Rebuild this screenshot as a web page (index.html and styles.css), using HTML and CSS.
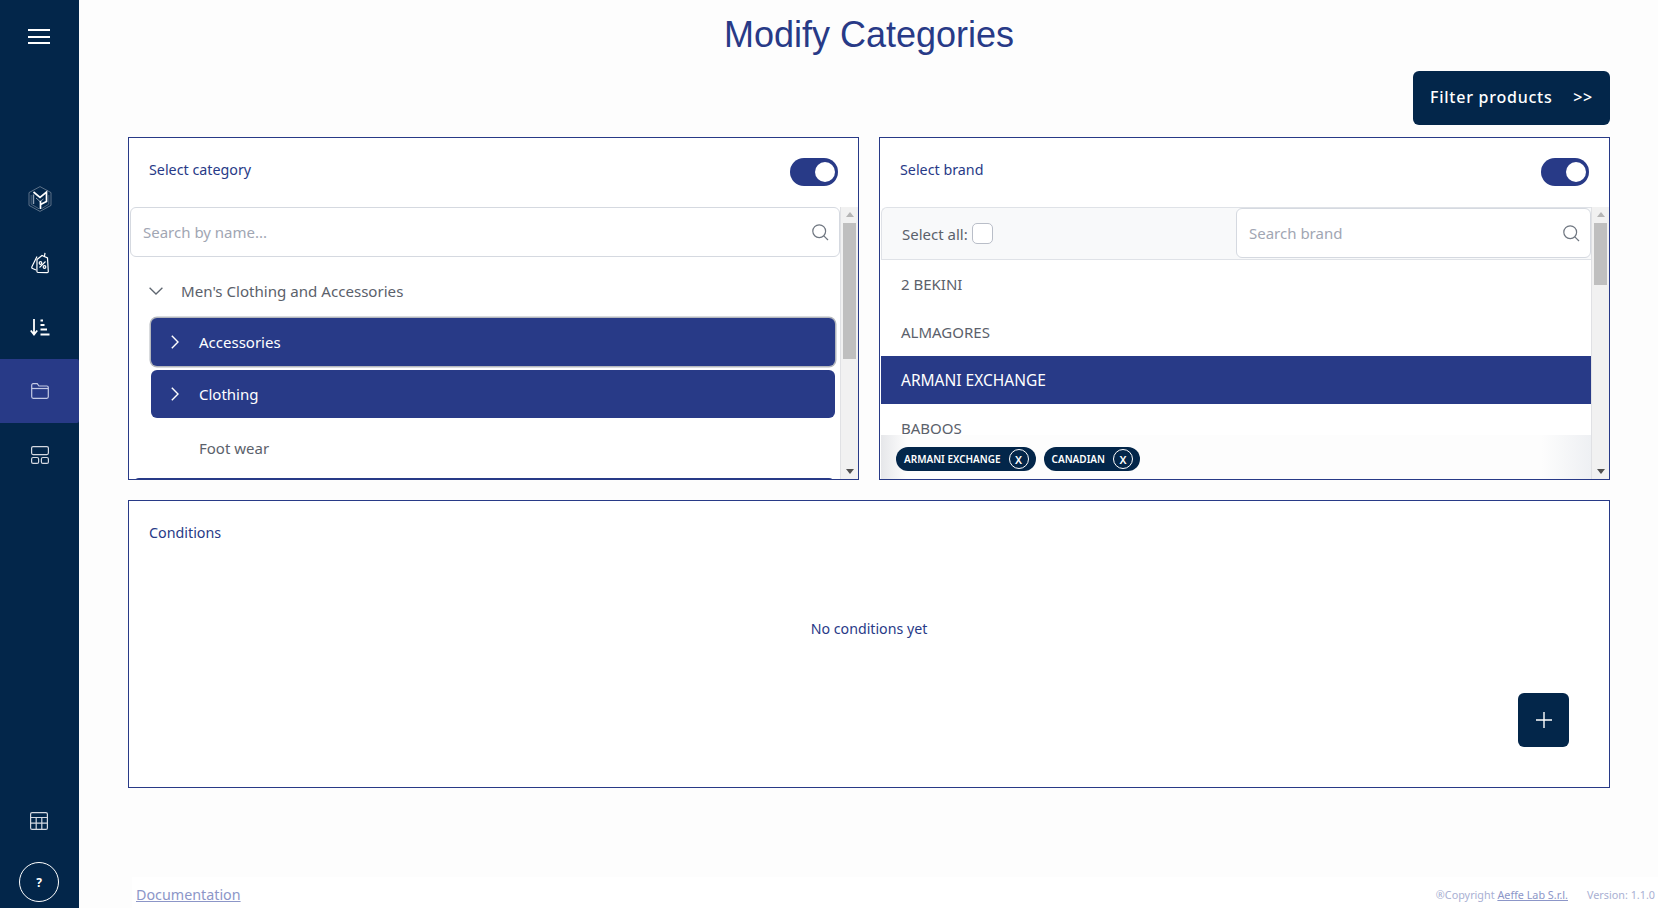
FILE: index.html
```html
<!DOCTYPE html>
<html lang="en">
<head>
<meta charset="utf-8">
<title>Modify Categories</title>
<link rel="stylesheet" href="styles.css">
</head>
<body>
<div class="app">
  <aside class="sidebar">
    <button class="burger" aria-label="Menu"><span></span><span></span><span></span></button>
    <nav class="nav">
      <a class="nav-item"><svg width="24" height="26" viewBox="0 0 24 26" fill="none"><path d="M12 .6 23 6.600v12.800L12 25.400 1 19.400V6.600z" stroke="#66798f" stroke-width=".9"/><path d="M3.200 9v9.200L11 22.800" stroke="#4f647c" stroke-width="1"/><path d="M20.800 9v9.200L14 22.400" stroke="#4f647c" stroke-width="1"/><path d="M5.500 6 12 11.500 18.500 6v9.500l-6 3" stroke="#fff" stroke-width="1.700"/><path d="M5.500 8.500V18" stroke="#8fa0b3" stroke-width="1.400"/><path d="M8 12 12 15.500 15.500 13" stroke="#8fa0b3" stroke-width="1"/><path d="M12.500 23V15" stroke="#fff" stroke-width="1.700"/></svg></a>
      <a class="nav-item"><svg width="20" height="22" viewBox="0 0 20 22" fill="none" stroke="#fff" stroke-width="1.200"><path d="M7 4.500 2 14.500c-.5 1-.2 1.700.6 2l3.400 1.500"/><path d="M7 7.500 12 3.500l5.500 2.500.8 13.500c0 .7-.4 1.200-1.100 1.200L8 20.500c-.7 0-1.100-.5-1.100-1.200z"/><path d="M14.500 4 15 .8"/><path d="M9.500 15.500l6-6" stroke-width="1.100"/><circle cx="10.500" cy="11" r="1.300"/><circle cx="14.500" cy="15" r="1.300"/></svg></a>
      <a class="nav-item"><svg width="20" height="17" viewBox="0 0 20 17" fill="none" stroke="#fff"><path d="M4 0v15M.8 11.500 4 15.500l3.200-4" stroke-width="1.800"/><path d="M10.500 1.500h2.500M10.500 6h4M10.500 10.500h6.500M10.500 15.500h9" stroke-width="1.800"/></svg></a>
      <a class="nav-item active"><svg width="18" height="16" viewBox="0 0 18 16" fill="none" stroke="#c3c9e4" stroke-width="1.200"><path d="M.7 13.800V2.200C.7 1.300 1.300.7 2.200.7h4l1.800 2.300h7.800c.9 0 1.500.6 1.500 1.500v9.300c0 .9-.6 1.500-1.500 1.500H2.200c-.9 0-1.500-.6-1.500-1.700z"/><path d="M.7 5.500h16.600"/></svg></a>
      <a class="nav-item"><svg width="18" height="18" viewBox="0 0 18 18" fill="none" stroke="#d5d9e2" stroke-width="1.200"><rect x=".6" y=".6" width="16.800" height="8" rx="1.500"/><rect x=".6" y="11.500" width="7" height="5.900" rx="1.500"/><rect x="10.400" y="11.500" width="7" height="5.900" rx="1.500"/></svg></a>
    </nav>
    <a class="table-link"><svg width="18" height="18" viewBox="0 0 18 18" fill="none" stroke="#d5d9e2" stroke-width="1.200"><rect x=".6" y=".6" width="16.800" height="16.800" rx="1.500"/><path d="M.6 5.500h16.800M.6 11.200h16.800M6.200 5.500v11.900M11.800 5.500v11.900"/></svg></a>
    <a class="help">?</a>
  </aside>

  <main class="main">
    <h1 class="title">Modify Categories</h1>
    <div class="actions">
      <button class="filter-btn"><span>Filter products</span><span>&gt;&gt;</span></button>
    </div>

    <section class="selectors">
      <div class="panel">
        <header class="panel-head">
          <span class="panel-label">Select category</span>
          <span class="toggle"><span class="knob"></span></span>
        </header>
        <div class="panel-body">
          <div class="panel-content">
            <label class="search search-cat">
              <span class="placeholder">Search by name...</span>
              <svg class="search-icon" width="17" height="17" viewBox="0 0 17 17" fill="none" stroke="#6f7680" stroke-width="1.200"><circle cx="7.200" cy="7.200" r="6.400"/><path d="M11.800 11.800 16 16"/></svg>
            </label>
            <div class="tree-root">
              <svg width="14" height="8" viewBox="0 0 14 8" fill="none" stroke="#5e6670" stroke-width="1.300"><path d="M.6.800 7 7l6.400-6.200"/></svg>
              <span>Men's Clothing and Accessories</span>
            </div>
            <ul class="tree">
              <li class="tree-item selected focused"><svg width="8" height="14" viewBox="0 0 8 14" fill="none" stroke="#fff" stroke-width="1.400"><path d="M.8.800 7 7 .8 13.200"/></svg><span>Accessories</span></li>
              <li class="tree-item selected"><svg width="8" height="14" viewBox="0 0 8 14" fill="none" stroke="#fff" stroke-width="1.400"><path d="M.8.800 7 7 .8 13.200"/></svg><span>Clothing</span></li>
              <li class="tree-item plain"><span>Foot wear</span></li>
              <li class="tree-item selected clipped"></li>
            </ul>
          </div>
          <div class="scrollbar"><i class="arrow up"></i><i class="thumb thumb-cat"></i><i class="arrow down"></i></div>
        </div>
      </div>

      <div class="panel">
        <header class="panel-head">
          <span class="panel-label">Select brand</span>
          <span class="toggle"><span class="knob"></span></span>
        </header>
        <div class="panel-body">
          <div class="panel-content">
            <div class="brand-bar">
              <span class="select-all">Select all:<i class="checkbox"></i></span>
              <label class="search search-brand">
                <span class="placeholder">Search brand</span>
                <svg class="search-icon" width="17" height="17" viewBox="0 0 17 17" fill="none" stroke="#6f7680" stroke-width="1.200"><circle cx="7.200" cy="7.200" r="6.400"/><path d="M11.800 11.800 16 16"/></svg>
              </label>
            </div>
            <ul class="brands">
              <li>2 BEKINI</li>
              <li>ALMAGORES</li>
              <li class="on">ARMANI EXCHANGE</li>
              <li>BABOOS</li>
            </ul>
            <div class="chips">
              <span class="chip">ARMANI EXCHANGE<b>X</b></span>
              <span class="chip">CANADIAN<b>X</b></span>
            </div>
          </div>
          <div class="scrollbar"><i class="arrow up"></i><i class="thumb thumb-brand"></i><i class="arrow down"></i></div>
        </div>
      </div>
    </section>

    <section class="panel conditions">
      <span class="panel-label">Conditions</span>
      <p class="empty">No conditions yet</p>
      <button class="add-btn" aria-label="Add"><svg width="16" height="16" viewBox="0 0 16 16" stroke="#fff" stroke-width="1.400"><path d="M8 0v16M0 8h16"/></svg></button>
    </section>

    <footer class="footer">
      <a class="doc-link">Documentation</a>
      <span class="legal">®Copyright <a>Aeffe Lab S.r.l.</a><span class="version">Version: 1.1.0</span></span>
    </footer>
  </main>
</div>
</body>
</html>
```
FILE: styles.css
```css
* { box-sizing: border-box; }
html, body { margin: 0; height: 100%; }
body {
  font-family: "Noto Sans", "Open Sans", sans-serif;
  font-size: 14.5px;
  color: #5b616b;
  background: #fdfdfd;
  overflow: hidden;
}
button { font: inherit; border: 0; padding: 0; cursor: pointer; }
ul { list-style: none; margin: 0; padding: 0; }
i { display: block; }

.app { display: flex; height: 908px; }

/* Sidebar */
.sidebar {
  width: 79px;
  flex: none;
  background: #03264a;
  display: flex;
  flex-direction: column;
  align-items: stretch;
}
.burger {
  width: 22px;
  height: 15px;
  margin: 29px 0 0 28px;
  background: none;
  display: flex;
  flex-direction: column;
  justify-content: space-between;
}
.burger span { display: block; height: 2px; background: #fff; }
.nav { margin-top: 123px; display: flex; flex-direction: column; }
.nav-item { height: 64px; display: flex; align-items: center; justify-content: center; }
.nav-item.active { background: #283a87; border-radius: 0 2px 2px 0; }
.table-link { margin-top: auto; display: flex; justify-content: center; padding-right: 2px; }
.help {
  width: 40px;
  height: 40px;
  margin: 32px 0 6px 19px;
  border: 1px solid #fff;
  border-radius: 50%;
  color: #fff;
  font-size: 12px;
  font-weight: 700;
  display: flex;
  align-items: center;
  justify-content: center;
}

/* Main */
.main { flex: 1; min-width: 0; display: flex; flex-direction: column; padding: 0 48px 0 49px; }
.title {
  margin: 14px 0 0;
  font: 400 36px/41px "Liberation Sans", Arial, sans-serif;
  color: #283a87;
  text-align: center;
}
.actions { display: flex; justify-content: flex-end; margin-top: 16px; }
.filter-btn {
  width: 197px;
  height: 54px;
  background: #03264a;
  color: #fff;
  border-radius: 6px;
  font-size: 16px;
  font-weight: 500;
  letter-spacing: .75px;
  display: flex;
  align-items: center;
  justify-content: space-between;
  padding: 0 17px 2px 17px;
}

.selectors { display: grid; grid-template-columns: 731px 731px; gap: 20px; margin-top: 12px; }
.panel { background: #fff; border: 1px solid #283a87; }
.selectors .panel { height: 343px; display: flex; flex-direction: column; overflow: hidden; }
.panel-head { height: 69px; flex: none; display: flex; align-items: flex-start; justify-content: space-between; padding: 20px 20px 0 20px; }
.panel-label { color: #283a87; font-size: 14.3px; line-height: 20px; padding-top: 2px; }
.toggle { width: 48px; height: 28px; border-radius: 14px; background: #283a87; display: flex; align-items: center; justify-content: flex-end; padding-right: 3px; }
.knob { width: 20px; height: 20px; border-radius: 50%; background: #fff; }

.panel-body { flex: 1; min-height: 0; display: flex; }
.panel-content { flex: 1; min-width: 0; position: relative; overflow: hidden; }

.scrollbar { width: 18px; flex: none; background: #f1f1f1; border-left: 1px solid #e0e1e4; display: flex; flex-direction: column; align-items: center; padding: 5px 0; }
.thumb { width: 13px; background: #bfbfbf; }
.thumb-cat { height: 136px; margin-top: 6px; }
.thumb-brand { height: 62px; margin-top: 6px; }
.arrow { width: 0; height: 0; border-left: 4px solid transparent; border-right: 4px solid transparent; }
.arrow.up { border-bottom: 5px solid #b5b5b5; }
.arrow.down { border-top: 5px solid #505050; margin-top: auto; }

.search { display: flex; align-items: center; justify-content: space-between; height: 50px; background: #fff; border: 1px solid #d5d9e0; border-radius: 6px; padding: 0 10px 0 12px; }
.placeholder { color: #a1a6b3; font-size: 15px; }
.search-cat { margin-left: 1px; }
.tree-root { height: 50px; margin-top: 9px; display: flex; align-items: center; gap: 18px; padding-left: 20px; font-size: 15.1px; }
.tree { padding: 0 5px 0 22px; margin-top: 2px; display: flex; flex-direction: column; gap: 4px; }
.tree-item { height: 48px; flex: none; border-radius: 6px; display: flex; align-items: center; gap: 20px; padding-left: 20px; font-size: 15px; }
.tree-item.selected { background: #283a87; color: #fff; }
.tree-item.focused { box-shadow: 0 0 0 1.500px #b4b7bd; }
.tree-item.plain { margin: 2px 0; padding-left: 48px; }
.tree-item.clipped { margin-left: -18px; }

.brand-bar { height: 53px; margin-left: 1px; background: #f8f9fa; border: 1px solid #dfe2e7; border-width: 1px 0 1px 1px; border-radius: 6px 0 0 0; display: flex; align-items: flex-start; justify-content: space-between; padding-left: 20px; }
.select-all { align-self: center; display: flex; align-items: center; gap: 4px; font-size: 15px; }
.checkbox { width: 21px; height: 21px; border: 1px solid #b9bec8; border-radius: 5px; background: #fff; }
.search-brand { width: 355px; }
.brands { margin-left: 1px; }
.brands li { height: 48px; display: flex; align-items: center; padding-left: 20px; font-size: 15px; }
.brands li.on { background: #283a87; color: #fff; font-size: 15.5px; }
.chips {
  position: absolute;
  left: 1px; right: 0; bottom: 0;
  height: 44px;
  background: linear-gradient(90deg, #e6e7ea 0, #fdfdfd 26px, #fdfdfd 93%, #eef0f3 100%);
  display: flex;
  gap: 8px;
  padding: 12px 0 0 15px;
}
.chip {
  height: 24px;
  border-radius: 12px;
  background: #03264a;
  color: #fff;
  font-size: 10px;
  font-weight: 600;
  display: flex;
  align-items: center;
  gap: 8px;
  padding: 0 7px 0 8px;
}
.chip b { width: 20px; height: 20px; border: 1px solid #fff; border-radius: 50%; display: flex; align-items: center; justify-content: center; font-weight: 600; font-size: 11px; }

.conditions { height: 288px; margin-top: 20px; padding: 20px 40px 0 20px; display: flex; flex-direction: column; }
.empty { margin: 76px 0 0; text-align: center; color: #283a87; font-size: 14.2px; line-height: 20px; padding-left: 20px; }
.add-btn { width: 51px; height: 54px; align-self: flex-end; margin-top: 54px; background: #03264a; border-radius: 6px; display: flex; align-items: center; justify-content: center; }

.footer { margin: auto -48px 0 4px; height: 31px; padding: 3px 3px 0 4px; background: #fff; display: flex; align-items: center; justify-content: space-between; }
.doc-link { color: #8c96c8; text-decoration: underline; font-size: 14.3px; }
.legal { color: #a9b0d3; font-size: 10.8px; }
.legal a { color: #8c96c8; text-decoration: underline; }
.version { margin-left: 19px; }
```
